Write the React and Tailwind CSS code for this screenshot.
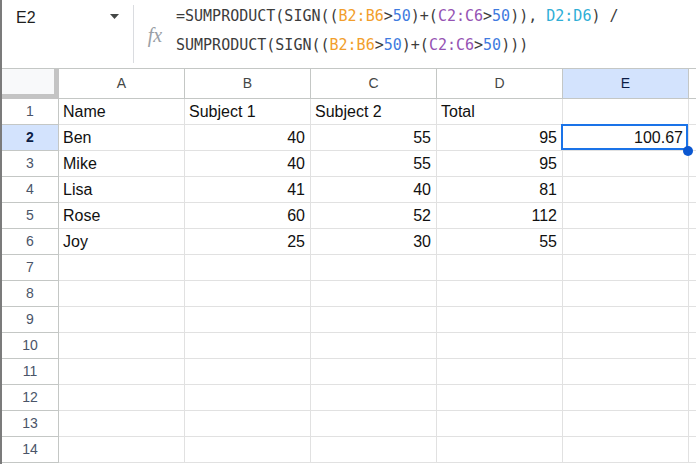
const cols = ['A', 'B', 'C', 'D', 'E'];

const data = [
  ['Name', 'Subject 1', 'Subject 2', 'Total', ''],
  ['Ben', 40, 55, 95, '100.67'],
  ['Mike', 40, 55, 95, ''],
  ['Lisa', 41, 40, 81, ''],
  ['Rose', 60, 52, 112, ''],
  ['Joy', 25, 30, 55, ''],
];

const rows = Array.from({ length: 14 }, (_, i) => i + 1);

const Orange = ({ children }) => <span className="text-[#f29e2b]">{children}</span>;
const Blue = ({ children }) => <span className="text-[#3f7be0]">{children}</span>;
const Purple = ({ children }) => <span className="text-[#9553b3]">{children}</span>;
const Teal = ({ children }) => <span className="text-[#2eaed6]">{children}</span>;

const FormulaBar = () => (
  <div className="flex h-[69px] border-b border-[#c4c7c5] bg-white">
    <div className="flex w-[131px] items-start justify-between pl-[14px] pr-[14px] pt-[6px]">
      <span className="text-[16px] text-[#1f1f1f]">E2</span>
      <svg width="9" height="5" viewBox="0 0 9 5" className="mt-[8px]">
        <path d="M0 0 L9 0 L4.5 5 Z" fill="#444746" />
      </svg>
    </div>
    <div className="my-[5px] w-px bg-[#dadce0]" />
    <div className="flex w-[42px] items-center justify-center pt-[1px]">
      <span
        className="text-[20px] italic text-[#9aa0a6]"
        style={{ fontFamily: '"Liberation Serif", serif' }}
      >
        fx
      </span>
    </div>
    <div
      className="flex flex-col pt-[2px] text-[15px] leading-[29px] text-[#3c3c3c]"
      style={{ fontFamily: '"DejaVu Sans Mono", "Liberation Mono", monospace' }}
    >
      <div className="whitespace-pre">
        =SUMPRODUCT(SIGN((<Orange>B2:B6</Orange>{'>'}<Blue>50</Blue>)+(<Purple>C2:C6</Purple>
        {'>'}<Blue>50</Blue>)), <Teal>D2:D6</Teal>) /
      </div>
      <div className="whitespace-pre">
        SUMPRODUCT(SIGN((<Orange>B2:B6</Orange>{'>'}<Blue>50</Blue>)+(<Purple>C2:C6</Purple>
        {'>'}<Blue>50</Blue>)))
      </div>
    </div>
  </div>
);

const Sheet = () => (
  <div className="grid grid-cols-[57px_repeat(5,126px)_1fr]">
    <div className="h-[30px] border-b-[5px] border-r-[5px] border-[#c4c4c4] bg-[#f8f9fa]" />
    {cols.map((c) => (
      <div
        key={c}
        className={`flex h-[30px] items-center justify-center border-b border-r border-[#c4c7c5] text-[14px] ${
          c === 'E' ? 'bg-[#d3e3fd] text-[#0b1d45]' : 'bg-white text-[#444746]'
        }`}
      >
        {c}
      </div>
    ))}
    <div className="h-[30px] border-b border-[#c4c7c5] bg-white" />

    {rows.map((r) => {
      const vals = data[r - 1] || ['', '', '', '', ''];
      return [
        <div
          key={`h${r}`}
          className={`flex h-[26px] items-center justify-center border-b border-r border-[#c4c7c5] text-[14px] ${
            r === 2 ? 'bg-[#d3e3fd] font-bold text-[#0b1d45]' : 'bg-white text-[#4a5468]'
          }`}
        >
          {r}
        </div>,
        ...vals.map((v, i) => {
          const isNum = typeof v === 'number' || (r === 2 && i === 4);
          return (
            <div
              key={`${r}-${i}`}
              className={`relative flex h-[26px] items-center border-b border-r border-[#e1e1e1] pt-[1px] text-[16px] text-[#111] ${
                isNum ? 'justify-end pr-[5px]' : 'pl-[4px]'
              }`}
            >
              {v}
              {r === 2 && i === 4 && (
                <>
                  <div className="absolute -left-[2px] -top-[1px] bottom-0 right-0 border-2 border-[#1a73e8]" />
                  <div className="absolute left-[120px] top-[21px] z-10 h-[10px] w-[10px] rounded-full bg-[#0b57d0]" />
                </>
              )}
            </div>
          );
        }),
        <div key={`f${r}`} className="h-[26px] border-b border-[#e1e1e1]" />,
      ];
    })}
  </div>
);

export default function App() {
  return (
    <div
      className="h-[464px] w-[696px] overflow-hidden border-l-2 border-[#7b7b7b] bg-white"
      style={{ fontFamily: '"Liberation Sans", Arial, sans-serif' }}
    >
      <FormulaBar />
      <Sheet />
    </div>
  );
}
